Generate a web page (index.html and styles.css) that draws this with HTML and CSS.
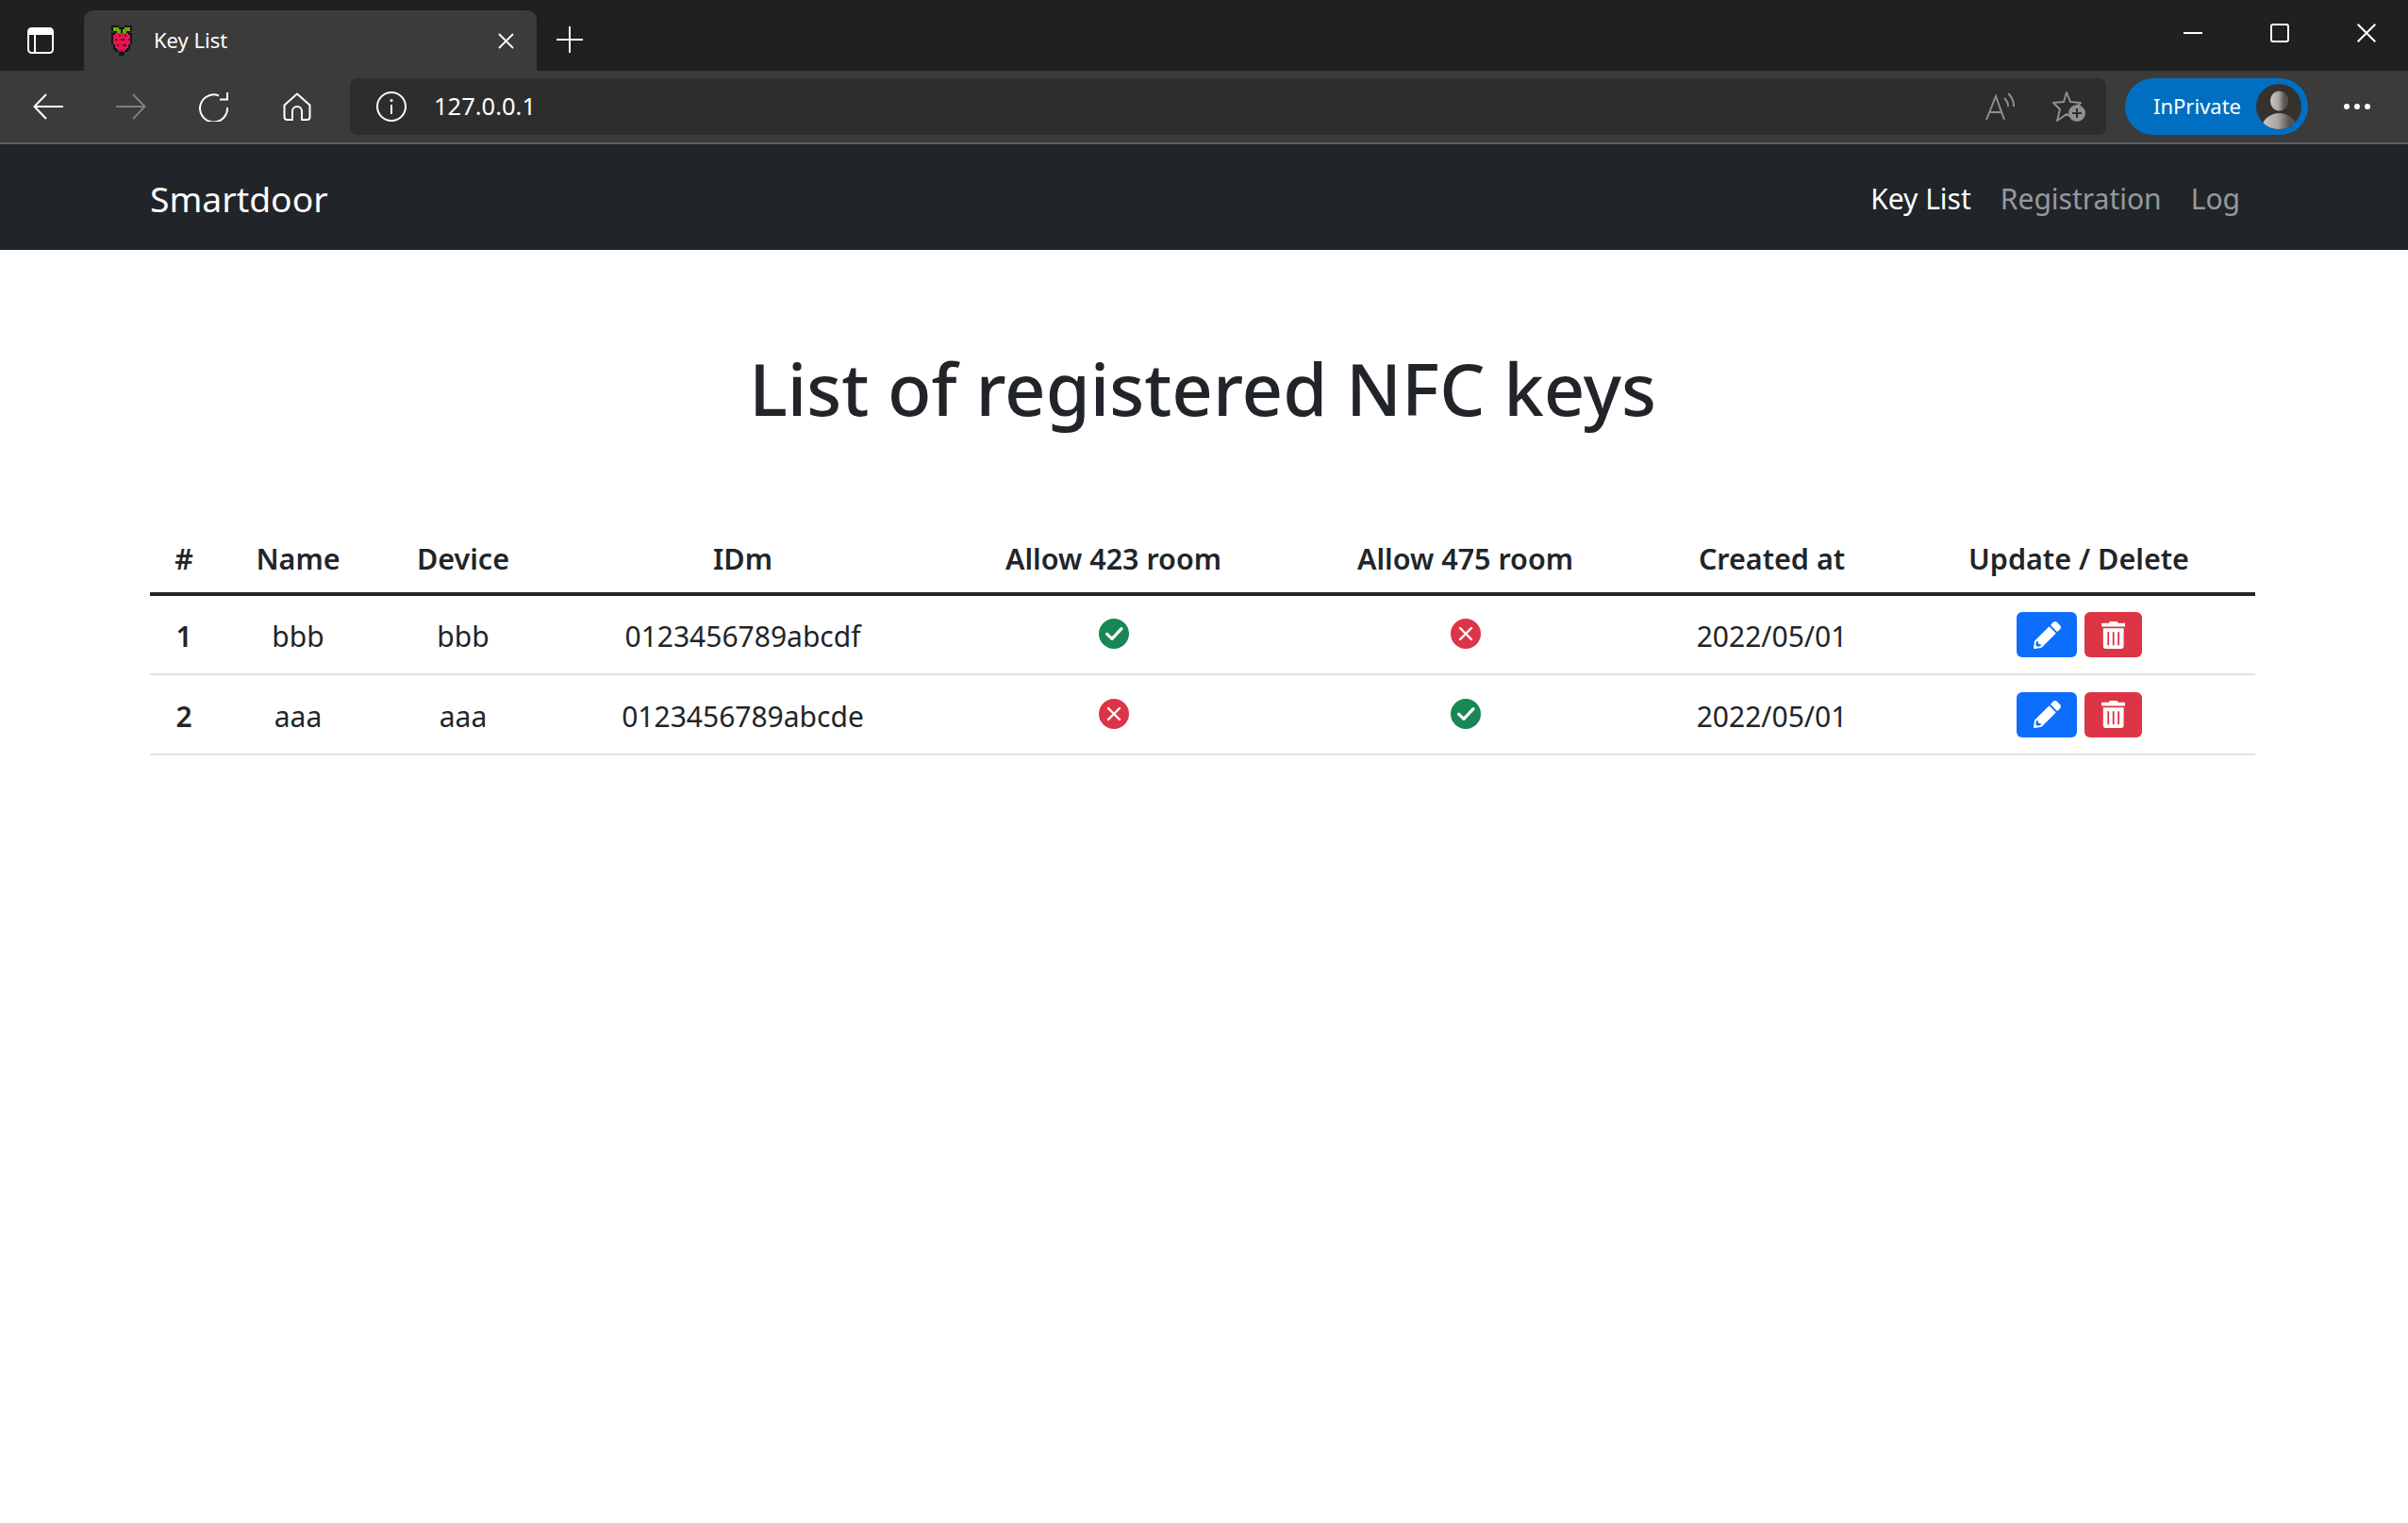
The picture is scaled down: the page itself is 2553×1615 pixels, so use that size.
FILE: index.html
```html
<!DOCTYPE html>
<html lang="en">
<head>
    <meta charset="UTF-8">
    <title>Key List</title>
    <link rel="stylesheet" href="styles.css">
</head>
<body>
    <div class="tabstrip">
        <div class="strip-btn">
            <svg class="ico" width="28" height="28" viewBox="0 0 28 28"><rect x="1" y="1" width="26" height="26" rx="3.5" fill="none" stroke="#fff" stroke-width="2"/><path d="M2 2h24v6H2z" fill="#fff"/><path d="M8 8v18" stroke="#fff" stroke-width="2"/></svg>
        </div>
        <div class="tab">
            <svg class="favicon" width="26" height="32" viewBox="0 0 13 16" shape-rendering="crispEdges">
                <path d="M1 0h4v1h3V0h4v3h-1v1h1v6h-1v3h-1v1H8v2H5v-2H3v-1H2v-3H1V4h1V3H1z" fill="#1b1214"/>
                <path d="M2 1h3v1h1v2H4V3H2zM7 2h1V1h3v2H9v1H7z" fill="#62b00c"/>
                <path d="M3 4h7v1h1v5h-1v2H9v1H8v1H5v-1H4v-1H3v-2H2V5h1z" fill="#e8144e"/>
                <path d="M5 5h1v1H5zM8 5h1v1H8zM3 7h1v1H3zM6 7h2v1H6zM10 7h1v1h-1zM4 10h1v1H4zM7 10h2v1H7zM6 13h1v1H6z" fill="#6e0a2a"/>
            </svg>
            <span class="tab-title">Key List</span>
            <svg class="tab-close" width="17" height="17" viewBox="0 0 17 17"><path d="M1 1l15 15M16 1L1 16" stroke="#fff" stroke-width="1.8"/></svg>
        </div>
        <svg class="new-tab" width="28" height="28" viewBox="0 0 28 28"><path d="M14 0v28M0 14h28" stroke="#fff" stroke-width="2"/></svg>
        <div class="win-btns">
            <svg class="win-btn" width="20" height="20" viewBox="0 0 20 20"><path d="M0 10h20" stroke="#fff" stroke-width="2"/></svg>
            <svg class="win-btn" width="20" height="20" viewBox="0 0 20 20"><rect x="1" y="1" width="18" height="18" rx="2" fill="none" stroke="#fff" stroke-width="2"/></svg>
            <svg class="win-btn" width="20" height="20" viewBox="0 0 20 20"><path d="M.7.7l18.6 18.6M19.3.7L.7 19.3" stroke="#fff" stroke-width="2"/></svg>
        </div>
    </div>

    <div class="toolbar">
        <div class="tool-btn"><svg width="32" height="28" viewBox="0 0 32 28"><path d="M32 14H2M14 1L1.500 14 14 27" fill="none" stroke="#fff" stroke-width="2"/></svg></div>
        <div class="tool-btn"><svg width="32" height="28" viewBox="0 0 32 28"><path d="M0 14h30M18 1l12.500 13L18 27" fill="none" stroke="#7e7e7e" stroke-width="2"/></svg></div>
        <div class="tool-btn"><svg width="32" height="32" viewBox="0 0 32 32"><path d="M21 4.500A14.500 14.500 0 1 0 30 17M30 1v7.500h-8" fill="none" stroke="#fff" stroke-width="2"/></svg></div>
        <div class="tool-btn"><svg width="30" height="30" viewBox="0 0 30 30"><path d="M15 1.500L1.500 13.500V26a3 3 0 0 0 3 3H10V20a5 5 0 0 1 10 0v9h5.500a3 3 0 0 0 3-3V13.500z" fill="none" stroke="#fff" stroke-width="2" stroke-linejoin="round"/></svg></div>
        <div class="addressbar">
            <svg class="info-icon" width="32" height="32" viewBox="0 0 32 32"><circle cx="16" cy="16" r="15" fill="none" stroke="#fff" stroke-width="2"/><path d="M16 14v10" stroke="#fff" stroke-width="2"/><circle cx="16" cy="9.500" r="1.500" fill="#fff"/></svg>
            <span class="url">127.0.0.1</span>
            <svg class="read-icon" width="31" height="30" viewBox="0 0 31 30"><path d="M1 29L11 4l9 25M4 21h13" fill="none" stroke="#8f8f8f" stroke-width="2"/><path d="M20 6a12 12 0 0 1 4 9M24 1a18 18 0 0 1 6 14" fill="none" stroke="#8f8f8f" stroke-width="2"/></svg>
            <svg class="fav-icon" width="36" height="34" viewBox="0 0 36 34"><path d="M15 2l4 10 11 1-8 7 3 11-10-6-10 7 3-12-7-7 11-1z" fill="none" stroke="#8f8f8f" stroke-width="2" stroke-linejoin="round"/><circle cx="26" cy="24" r="9" fill="#8f8f8f"/><path d="M26 19v10M21 24h10" stroke="#2d2d2d" stroke-width="2"/></svg>
        </div>
        <div class="inprivate">
            <span class="inprivate-label">InPrivate</span>
            <svg class="avatar" width="48" height="48" viewBox="0 0 48 48">
                <defs><linearGradient id="ag" x1="0" x2="1" y1="0" y2="0"><stop offset="0" stop-color="#c9c7c2"/><stop offset=".45" stop-color="#a9a7a1"/><stop offset=".8" stop-color="#57544f"/></linearGradient></defs>
                <clipPath id="ac"><circle cx="24" cy="24" r="24"/></clipPath>
                <circle cx="24" cy="24" r="24" fill="#35322e"/>
                <g clip-path="url(#ac)"><ellipse cx="24.500" cy="18" rx="9.500" ry="10.500" fill="url(#ag)"/><ellipse cx="24.500" cy="46" rx="18" ry="15" fill="url(#ag)"/></g>
            </svg>
        </div>
        <div class="more"><i></i><i></i><i></i></div>
    </div>

    <nav class="navbar">
        <a class="brand">Smartdoor</a>
        <div class="nav-links">
            <a class="nav-link active">Key List</a>
            <a class="nav-link">Registration</a>
            <a class="nav-link">Log</a>
        </div>
    </nav>

    <main class="container">
        <h1 class="title">List of registered NFC keys</h1>
        <table class="keys">
            <colgroup>
                <col class="c-num"><col class="c-name"><col class="c-device"><col class="c-idm">
                <col class="c-room"><col class="c-room"><col class="c-created"><col class="c-actions">
            </colgroup>
            <thead>
                <tr>
                    <th>#</th><th>Name</th><th>Device</th><th>IDm</th>
                    <th>Allow 423 room</th><th>Allow 475 room</th><th>Created at</th><th>Update / Delete</th>
                </tr>
            </thead>
            <tbody>
                <tr>
                    <th>1</th><td>bbb</td><td>bbb</td><td>0123456789abcdf</td>
                    <td><svg class="state ok" viewBox="0 0 32 32"><circle cx="16" cy="16" r="16"/><path class="mark" d="M8.700 16.300l5.300 5 10-10.600"/></svg></td>
                    <td><svg class="state ng" viewBox="0 0 32 32"><circle cx="16" cy="16" r="16"/><path class="mark thin" d="M10 10l12 12M22 10L10 22"/></svg></td>
                    <td>2022/05/01</td>
                    <td>
                        <div class="actions">
                            <a class="btn btn-edit"><svg viewBox="0 0 512 512"><path d="M497.900 142.100l-46.100 46.100c-4.700 4.700-12.300 4.700-17 0l-111-111c-4.700-4.700-4.700-12.300 0-17l46.100-46.100c18.700-18.700 49.100-18.700 67.900 0l60.100 60.100c18.800 18.700 18.800 49.100 0 67.900zM284.200 99.800L21.600 362.400.4 483.900c-2.900 16.400 11.400 30.600 27.800 27.800l121.500-21.300 262.600-262.600c4.700-4.700 4.700-12.300 0-17l-111-111c-4.800-4.700-12.400-4.700-17.100 0zM88 424h48v36.300l-64.500 11.300-31.100-31.100L51.700 376H88v48z"/></svg></a>
                            <a class="btn btn-del"><svg viewBox="0 0 448 512"><path d="M32 464a48 48 0 0 0 48 48h288a48 48 0 0 0 48-48V128H32zm272-256a16 16 0 0 1 32 0v224a16 16 0 0 1-32 0zm-96 0a16 16 0 0 1 32 0v224a16 16 0 0 1-32 0zm-96 0a16 16 0 0 1 32 0v224a16 16 0 0 1-32 0zM432 32H312l-9.400-18.700A24 24 0 0 0 281.100 0H166.800a23.720 23.720 0 0 0-21.400 13.300L136 32H16A16 16 0 0 0 0 48v32a16 16 0 0 0 16 16h416a16 16 0 0 0 16-16V48a16 16 0 0 0-16-16z"/></svg></a>
                        </div>
                    </td>
                </tr>
                <tr>
                    <th>2</th><td>aaa</td><td>aaa</td><td>0123456789abcde</td>
                    <td><svg class="state ng" viewBox="0 0 32 32"><circle cx="16" cy="16" r="16"/><path class="mark thin" d="M10 10l12 12M22 10L10 22"/></svg></td>
                    <td><svg class="state ok" viewBox="0 0 32 32"><circle cx="16" cy="16" r="16"/><path class="mark" d="M8.700 16.300l5.300 5 10-10.600"/></svg></td>
                    <td>2022/05/01</td>
                    <td>
                        <div class="actions">
                            <a class="btn btn-edit"><svg viewBox="0 0 512 512"><path d="M497.900 142.100l-46.100 46.100c-4.700 4.700-12.300 4.700-17 0l-111-111c-4.700-4.700-4.700-12.300 0-17l46.100-46.100c18.700-18.700 49.100-18.700 67.900 0l60.100 60.100c18.800 18.700 18.800 49.100 0 67.900zM284.200 99.800L21.600 362.400.4 483.900c-2.900 16.400 11.400 30.600 27.800 27.800l121.500-21.300 262.600-262.600c4.700-4.700 4.700-12.300 0-17l-111-111c-4.800-4.700-12.400-4.700-17.100 0zM88 424h48v36.300l-64.500 11.300-31.100-31.100L51.700 376H88v48z"/></svg></a>
                            <a class="btn btn-del"><svg viewBox="0 0 448 512"><path d="M32 464a48 48 0 0 0 48 48h288a48 48 0 0 0 48-48V128H32zm272-256a16 16 0 0 1 32 0v224a16 16 0 0 1-32 0zm-96 0a16 16 0 0 1 32 0v224a16 16 0 0 1-32 0zm-96 0a16 16 0 0 1 32 0v224a16 16 0 0 1-32 0zM432 32H312l-9.400-18.700A24 24 0 0 0 281.100 0H166.800a23.720 23.720 0 0 0-21.400 13.300L136 32H16A16 16 0 0 0 0 48v32a16 16 0 0 0 16 16h416a16 16 0 0 0 16-16V48a16 16 0 0 0-16-16z"/></svg></a>
                        </div>
                    </td>
                </tr>
            </tbody>
        </table>
    </main>
</body>
</html>
```
FILE: styles.css
```css
* {
    box-sizing: border-box;
    margin: 0;
    padding: 0;
}

body {
    font-family: "Noto Sans", "Open Sans", sans-serif;
    background: #fff;
    color: #212529;
}

svg {
    display: block;
}

/* browser chrome */
.tabstrip {
    display: flex;
    align-items: flex-end;
    height: 75px;
    background: #202020;
}

.strip-btn {
    width: 89px;
    height: 64px;
    padding: 18px 0 0 29px;
}

.tab {
    display: flex;
    align-items: center;
    width: 480px;
    height: 64px;
    padding: 0 24px 0 27px;
    background: #3b3b3b;
    border-radius: 10px 10px 0 0;
    color: #fff;
}

.tab-title {
    margin: -2px 0 0 21px;
    font-size: 22px;
    flex: 1;
}

.new-tab {
    margin: 0 0 19px 21px;
}

.win-btns {
    display: flex;
    margin: 0 34px 30px auto;
    gap: 72px;
}

.toolbar {
    display: flex;
    align-items: center;
    height: 76px;
    padding: 0 106px 0 7px;
    background: #3b3b3b;
    position: relative;
}

.tool-btn {
    display: flex;
    justify-content: center;
    width: 88px;
}

.addressbar {
    display: flex;
    align-items: center;
    flex: 1;
    height: 60px;
    margin-left: 12px;
    padding: 0 21px 0 28px;
    background: #2d2d2d;
    border-radius: 8px;
}

.url {
    flex: 1;
    margin: -2px 0 0 29px;
    font-size: 25.500px;
    color: #fff;
}

.fav-icon {
    margin-left: 40px;
}

.inprivate {
    display: flex;
    align-items: center;
    width: 194px;
    height: 60px;
    margin-left: 20px;
    padding: 0 7px 0 30px;
    background: #016fc1;
    border-radius: 30px;
    color: #fff;
}

.inprivate-label {
    flex: 1;
    margin-top: -2px;
    font-size: 22px;
}

.more {
    display: flex;
    gap: 5px;
    position: absolute;
    right: 40px;
    top: 35px;
}

.more i {
    width: 6px;
    height: 6px;
    background: #fff;
    border-radius: 50%;
}

/* page */
.navbar {
    display: flex;
    align-items: center;
    justify-content: space-between;
    height: 114px;
    padding: 2px 178px 0 159px;
    background: #212529;
    border-top: 2px solid #5f5f5f;
}

.brand {
    font-size: 37.300px;
    color: #fff;
}

.nav-links {
    display: flex;
    gap: 31px;
}

.nav-link {
    font-size: 30px;
    color: rgba(255, 255, 255, .55);
}

.nav-link.active {
    color: #fff;
}

.container {
    padding: 0 162px 0 159px;
}

.title {
    margin-top: 103px;
    font-size: 76px;
    font-weight: 500;
    line-height: 88px;
    text-align: center;
}

.keys {
    width: 100%;
    margin-top: 97px;
    border-collapse: collapse;
    table-layout: fixed;
    font-size: 30px;
    text-align: center;
}

.c-num { width: 72px; }
.c-name { width: 170px; }
.c-device { width: 180px; }
.c-idm { width: 413px; }
.c-room { width: 373px; }
.c-created { width: 277px; }
.c-actions { width: 374px; }

.keys th,
.keys td {
    height: 85px;
    padding-top: 3px;
    font-weight: 400;
    vertical-align: middle;
    border-bottom: 2px solid #dee2e6;
}

.keys tbody th {
    font-weight: 600;
}

.keys thead th {
    height: 77px;
    padding-top: 3px;
    font-size: 30.500px;
    font-weight: 600;
    border-bottom: 4px solid #212529;
}

.state {
    width: 32px;
    height: 32px;
    margin: -5px auto 0;
}

.state.ok { fill: #198754; }
.state.ng { fill: #dc3545; }

.mark {
    fill: none;
    stroke: #fff;
    stroke-width: 3.200;
    stroke-linecap: round;
    stroke-linejoin: round;
}

.mark.thin {
    stroke-width: 2.400;
}

.actions {
    display: flex;
    justify-content: center;
    gap: 8px;
    margin-top: -3px;
    padding-left: 1px;
}

.btn {
    display: flex;
    align-items: center;
    justify-content: center;
    height: 48px;
    border-radius: 6px;
    fill: #fff;
}

.btn svg {
    height: 29px;
}

.btn-edit {
    width: 64px;
    background: #0d6efd;
}

.btn-del {
    width: 61px;
    background: #dc3545;
}
```
